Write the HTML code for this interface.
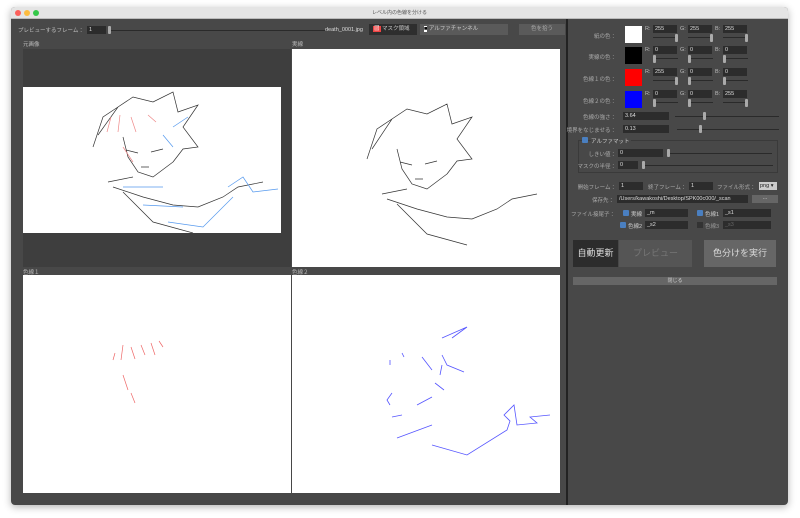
<!DOCTYPE html><html><head><meta charset="utf-8"><style>
*{margin:0;padding:0;box-sizing:border-box}
body{width:800px;height:518px;background:#fff;position:relative;overflow:hidden;font-family:"Liberation Sans","Noto Sans CJK JP",sans-serif;font-size:5.5px;color:#bbb}
.a{position:absolute;white-space:nowrap}
.win{left:11px;top:7px;width:777px;height:498px;background:#484848;box-shadow:0 2px 8px rgba(0,0,0,.3);border-radius:4px;overflow:hidden}
.tb{left:0;top:0;width:777px;height:12px;background:#e4e4e4;border-bottom:1px solid #bbb;text-align:center;color:#555;font-size:5px;line-height:12px}
.dot{width:6px;height:6px;border-radius:50%;top:3px}
.in{background:#2c2c2c;color:#ddd;height:8px;font-size:5.5px;line-height:8px;padding-left:2px;overflow:hidden}
.tr{height:1px;background:#2a2a2a}
.kn{width:3px;height:8px;background:#aaa;border-radius:1px}
.lb{text-align:right;color:#aaa}
.white{background:#fff}
.cb{width:6px;height:6px;background:#4a7fc0;border-radius:1px}
</style></head><body>
<div class="a win">
<div class="a tb">レベル内の色線を分ける</div>
<div class="a dot" style="left:4px;background:#fc605b"></div>
<div class="a dot" style="left:13px;background:#fdbc40"></div>
<div class="a dot" style="left:22px;background:#34c84a"></div>

<div class="a" style="left:7px;top:19px">プレビューするフレーム：</div>
<div class="a in" style="left:76px;top:19px;width:19px">1</div>
<div class="a tr" style="left:98px;top:23px;width:220px"></div>
<div class="a kn" style="left:97px;top:19px"></div>
<div class="a" style="left:314px;top:20px;color:#ddd">death_0001.jpg</div>
<div class="a" style="left:358px;top:17px;width:48px;height:11px;background:#2e2e2e;color:#ccc;line-height:11px;padding-left:4px"><span style="background:#e44;color:#fff;padding:0 1px">▨</span> マスク領域</div>
<div class="a" style="left:409px;top:17px;width:88px;height:11px;background:#5a5a5a;color:#ccc;line-height:11px;padding-left:4px"><span style="background:#fff;color:#000">■</span> アルファチャンネル</div>
<div class="a" style="left:508px;top:17px;width:46px;height:11px;background:#5a5a5a;color:#aaa;line-height:11px;text-align:center">色を拾う</div>

<div class="a" style="left:12px;top:33px">元画像</div>
<div class="a" style="left:281px;top:33px">実線</div>
<div class="a" style="left:12px;top:261px">色線１</div>
<div class="a" style="left:281px;top:261px">色線２</div>

<div class="a" style="left:12px;top:42px;width:268px;height:218px;background:#3e3e3e"></div>
<div class="a white" style="left:12px;top:80px;width:258px;height:146px">
<svg width="258" height="146" viewBox="0 0 258 146" fill="none" stroke-width=".7">
<g stroke="#333"><path d="M75 48 L95 20 L110 10 L130 15 L150 5 L155 25 L175 18 L160 40 L175 60 L160 62 L150 75 M95 20 L80 30 L70 60 M100 50 L105 70 L115 85 L130 90 L150 75 M85 95 L110 90 M90 100 L120 110 L150 118 L175 120 L200 110 L215 100 L240 95 M100 105 L130 135 L170 146"/><path d="M103 63 L115 66 M128 65 L140 62 M118 80 L126 80"/></g>
<g stroke="#e88"><path d="M88 30 L84 45 M97 28 L95 45 M108 30 L113 45 M125 28 L133 35 M100 60 L110 75"/></g>
<g stroke="#59e"><path d="M150 40 L165 30 M140 48 L150 60 M100 100 L140 100 M120 118 L160 120 M145 135 L180 140 L210 110 M205 100 L220 90 L230 105 L255 102"/></g>
</svg></div>

<div class="a white" style="left:281px;top:42px;width:268px;height:218px">
<svg width="268" height="218" viewBox="0 0 268 218" fill="none" stroke="#333" stroke-width=".7">
<path d="M80 100 L100 70 L115 60 L135 65 L155 55 L160 75 L180 68 L165 90 L180 110 L165 112 L155 125 M100 70 L85 80 L75 110 M105 100 L110 120 L120 135 L135 140 L155 125 M90 145 L115 140 M95 150 L125 160 L155 168 L180 170 L205 160 L220 150 L245 145 M105 155 L135 185 L175 196"/><path d="M108 113 L120 116 M133 115 L145 112 M123 130 L131 130"/>
</svg></div>

<div class="a white" style="left:12px;top:268px;width:268px;height:218px">
<svg width="268" height="218" viewBox="0 0 268 218" fill="none" stroke="#e66" stroke-width=".7">
<path d="M92 78 L90 85 M100 70 L98 85 M108 72 L112 84 M118 70 L122 80 M128 68 L132 80 M136 66 L140 72 M100 100 L105 115 M108 118 L112 128"/></svg></div>

<div class="a white" style="left:281px;top:268px;width:268px;height:218px">
<svg width="268" height="218" viewBox="0 0 268 218" fill="none" stroke="#55f" stroke-width=".8">
<path d="M150 63 L175 52 L160 63 M150 80 L155 90 L172 97 M130 82 L140 95 M98 85 L98 90 M110 78 L112 82 M100 118 L95 125 L98 130 M125 130 L140 122 M100 142 L110 140 M105 163 L140 150 M140 170 L175 180 L215 155 L218 146 L212 140 L222 130 L225 150 L245 148 L238 142 L258 140 M143 108 L152 115 M150 90 L148 100"/></svg></div>

<div class="a" style="left:555px;top:12px;width:2px;height:486px;background:#222"></div>

<div class="a lb" style="left:565px;top:25px;width:40px">紙の色：</div>
<div class="a white" style="left:614px;top:19px;width:17px;height:17px"></div>
<div class="a lb" style="left:565px;top:46px;width:40px">実線の色：</div>
<div class="a" style="left:614px;top:40px;width:17px;height:17px;background:#000"></div>
<div class="a lb" style="left:565px;top:68px;width:40px">色線１の色：</div>
<div class="a" style="left:614px;top:62px;width:17px;height:17px;background:#f00"></div>
<div class="a lb" style="left:565px;top:90px;width:40px">色線２の色：</div>
<div class="a" style="left:614px;top:84px;width:17px;height:17px;background:#00f"></div>

<div class="a lb" style="left:555px;top:106px;width:50px">色線の強さ：</div>
<div class="a in" style="left:612px;top:105px;width:46px">3.64</div>
<div class="a tr" style="left:664px;top:109px;width:104px"></div><div class="a kn" style="left:692px;top:105px"></div>
<div class="a lb" style="left:545px;top:119px;width:60px">境界をなじませる：</div>
<div class="a in" style="left:612px;top:118px;width:46px">0.13</div>
<div class="a tr" style="left:666px;top:122px;width:102px"></div><div class="a kn" style="left:688px;top:118px"></div>

<div class="a" style="left:567px;top:133px;width:200px;height:33px;border:1px solid #3a3a3a"></div>
<div class="a cb" style="left:571px;top:130px"></div>
<div class="a" style="left:580px;top:130px;color:#ccc;background:#484848;padding-right:2px">アルファマット</div>
<div class="a lb" style="left:565px;top:143px;width:40px">しきい値：</div>
<div class="a in" style="left:607px;top:142px;width:45px">0</div>
<div class="a tr" style="left:657px;top:146px;width:104px"></div><div class="a kn" style="left:656px;top:142px"></div>
<div class="a lb" style="left:555px;top:155px;width:50px">マスクの半径：</div>
<div class="a in" style="left:607px;top:154px;width:20px">0</div>
<div class="a tr" style="left:632px;top:158px;width:130px"></div><div class="a kn" style="left:631px;top:154px"></div>

<div class="a lb" style="left:555px;top:176px;width:50px">開始フレーム：</div>
<div class="a in" style="left:608px;top:175px;width:24px">1</div>
<div class="a" style="left:637px;top:176px;color:#aaa">終了フレーム：</div>
<div class="a in" style="left:678px;top:175px;width:24px">1</div>
<div class="a" style="left:706px;top:176px;color:#aaa">ファイル形式：</div>
<div class="a" style="left:748px;top:175px;width:18px;height:8px;background:#ccc;color:#222;line-height:8px;padding-left:1px">png ▾</div>

<div class="a lb" style="left:555px;top:189px;width:48px">保存先：</div>
<div class="a in" style="left:606px;top:188px;width:131px">/Users/kawakoshi/Desktop/SPK00c000/_scan</div>
<div class="a" style="left:741px;top:188px;width:26px;height:8px;background:#666;color:#ddd;text-align:center;line-height:6px">...</div>

<div class="a" style="left:560px;top:203px;color:#aaa">ファイル接尾子：</div>
<div class="a cb" style="left:612px;top:203px"></div><div class="a" style="left:620px;top:203px;color:#ccc">実線</div>
<div class="a in" style="left:634px;top:202px;width:43px">_m</div>
<div class="a cb" style="left:686px;top:203px"></div><div class="a" style="left:694px;top:203px;color:#ccc">色線1</div>
<div class="a in" style="left:712px;top:202px;width:48px">_s1</div>
<div class="a cb" style="left:609px;top:215px"></div><div class="a" style="left:617px;top:215px;color:#ccc">色線2</div>
<div class="a in" style="left:634px;top:214px;width:43px">_s2</div>
<div class="a" style="left:686px;top:215px;width:6px;height:6px;background:#333"></div><div class="a" style="left:694px;top:215px;color:#999">色線3</div>
<div class="a in" style="left:712px;top:214px;width:48px;color:#666">_s3</div>

<div class="a" style="left:562px;top:233px;width:45px;height:27px;background:#2c2c2c;color:#ddd;font-size:9px;text-align:center;line-height:27px">自動更新</div>
<div class="a" style="left:608px;top:233px;width:73px;height:27px;background:#555;color:#777;font-size:9px;text-align:center;line-height:27px">プレビュー</div>
<div class="a" style="left:693px;top:233px;width:72px;height:27px;background:#666;color:#ddd;font-size:9px;text-align:center;line-height:27px">色分けを実行</div>
<div class="a" style="left:562px;top:270px;width:204px;height:8px;background:#666;color:#ccc;text-align:center;line-height:8px;font-size:5px">閉じる</div>
</div>
<div class="a" style="left:0;top:0" id="rgb"></div>
<script>
var rows=[[26,[255,255,255]],[47,[0,0,0]],[69,[255,0,0]],[91,[0,0,255]]];
var h='';
rows.forEach(function(r){var y=r[0];[['R',645],['G',680],['B',715]].forEach(function(c,i){var v=r[1][i];
h+='<div class="a" style="left:'+c[1]+'px;top:'+y+'px;color:#bbb">'+c[0]+':</div>';
h+='<div class="a in" style="left:'+(c[1]+8)+'px;top:'+(y-1)+'px;width:24px">'+v+'</div>';
h+='<div class="a tr" style="left:'+(c[1]+8)+'px;top:'+(y+11)+'px;width:25px"></div>';
h+='<div class="a kn" style="left:'+(c[1]+8+Math.round(v/255*22))+'px;top:'+(y+8)+'px"></div>';});});
document.getElementById('rgb').innerHTML=h;
</script>
</body></html>
